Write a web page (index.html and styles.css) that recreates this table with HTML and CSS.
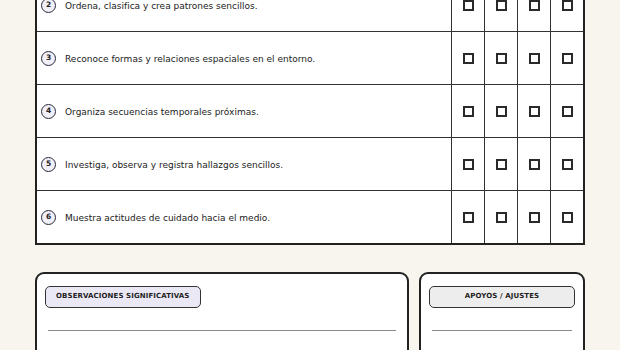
FILE: index.html
```html
<!DOCTYPE html>
<html lang="es">
<head>
<meta charset="utf-8">
<title>Registro de observación</title>
<link rel="stylesheet" href="styles.css">
</head>
<body>
<main class="sheet">
  <table class="grid">
    <colgroup>
      <col class="col-item">
      <col class="col-check"><col class="col-check"><col class="col-check"><col class="col-check">
    </colgroup>
    <tbody>
      <tr>
        <td class="item"><span class="num">2</span><span class="txt">Ordena, clasifica y crea patrones sencillos.</span></td>
        <td class="check"><span class="box"></span></td><td class="check"><span class="box"></span></td><td class="check"><span class="box"></span></td><td class="check"><span class="box"></span></td>
      </tr>
      <tr>
        <td class="item"><span class="num">3</span><span class="txt">Reconoce formas y relaciones espaciales en el entorno.</span></td>
        <td class="check"><span class="box"></span></td><td class="check"><span class="box"></span></td><td class="check"><span class="box"></span></td><td class="check"><span class="box"></span></td>
      </tr>
      <tr>
        <td class="item"><span class="num">4</span><span class="txt">Organiza secuencias temporales próximas.</span></td>
        <td class="check"><span class="box"></span></td><td class="check"><span class="box"></span></td><td class="check"><span class="box"></span></td><td class="check"><span class="box"></span></td>
      </tr>
      <tr>
        <td class="item"><span class="num">5</span><span class="txt">Investiga, observa y registra hallazgos sencillos.</span></td>
        <td class="check"><span class="box"></span></td><td class="check"><span class="box"></span></td><td class="check"><span class="box"></span></td><td class="check"><span class="box"></span></td>
      </tr>
      <tr>
        <td class="item"><span class="num">6</span><span class="txt">Muestra actitudes de cuidado hacia el medio.</span></td>
        <td class="check"><span class="box"></span></td><td class="check"><span class="box"></span></td><td class="check"><span class="box"></span></td><td class="check"><span class="box"></span></td>
      </tr>
    </tbody>
  </table>

  <section class="notes">
    <div class="card">
      <div class="label label-obs">OBSERVACIONES SIGNIFICATIVAS</div>
      <div class="line"></div>
      <div class="line"></div>
    </div>
    <div class="card">
      <div class="label label-sup">APOYOS / AJUSTES</div>
      <div class="line"></div>
      <div class="line"></div>
    </div>
  </section>
</main>
</body>
</html>
```

FILE: styles.css
```css
* { box-sizing: border-box; }

html, body {
  margin: 0;
  padding: 0;
  background: #f8f4ee;
  font-family: "DejaVu Sans", "Liberation Sans", sans-serif;
  color: #222;
  overflow: hidden;
}

.sheet {
  width: 550px;
  margin: -23px auto 0;
}

.grid {
  width: 550px;
  border-collapse: separate;
  border-spacing: 0;
  table-layout: fixed;
  background: #fff;
  border: 2px solid #222;
}

.col-item { width: 414px; }
.col-check { width: 33px; }

.grid td {
  height: 53px;
  padding: 0;
  vertical-align: middle;
  border-bottom: 1px solid #333;
}

.grid tr:last-child td { border-bottom: 0; height: 52px; }

.item {
  padding-left: 4px !important;
  font-size: 9px;
  color: #222;
}

.txt { vertical-align: middle; }

.num {
  display: inline-block;
  width: 15px;
  height: 15px;
  border: 1.5px solid #2a2a3a;
  border-radius: 50%;
  background: #f1eff8;
  font-size: 7.5px;
  font-weight: bold;
  line-height: 12px;
  text-align: center;
  margin-right: 9px;
  vertical-align: middle;
}

.check {
  border-left: 1px solid #333;
}

.box {
  display: block;
  width: 11px;
  height: 11px;
  margin: 1px auto 0;
  border: 2px solid #2a2a2a;
  background: #fff;
}

.notes {
  margin-top: 27px;
  display: grid;
  grid-template-columns: 374px 1fr;
  gap: 10px;
}

.card {
  display: flex;
  flex-direction: column;
  background: #fff;
  border: 2px solid #222;
  border-radius: 9px;
  padding: 12px 8px 0;
  min-height: 140px;
}

.label {
  height: 22px;
  border: 1.5px solid #333;
  border-radius: 5px;
  font-size: 7px;
  font-weight: bold;
  letter-spacing: 0.1px;
  line-height: 19px;
  color: #1e1e1e;
}

.label-obs {
  align-self: flex-start;
  padding: 0 10px;
  background: #ebe8f6;
}

.label-sup {
  text-align: center;
  background: #ededed;
}

.line {
  margin: 22px 3px 0;
  border-top: 1.5px solid #8a8a8a;
}
```
